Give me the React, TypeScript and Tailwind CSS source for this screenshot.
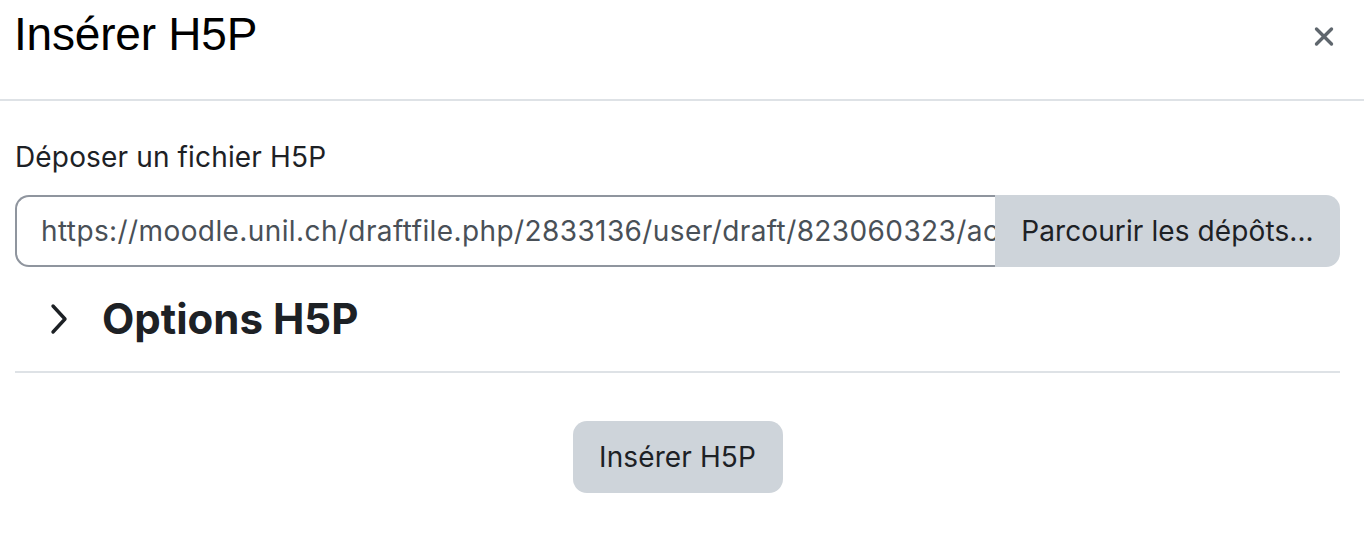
import { X } from "lucide-react";

const fileUrl = "https://moodle.unil.ch/draftfile.php/2833136/user/draft/823060323/activite-interactive.h5p";

export default function App() {
  return (
    <div className="h-[536px] w-[1364px] overflow-hidden bg-white font-['Inter','Noto_Sans',sans-serif] text-[#1d2125]">
      <header className="flex h-[101px] items-start justify-between border-b-2 border-[#dee2e6] pl-[14px] pr-[25px]">
        <h1 className="mt-[6px] font-['Liberation_Sans',Arial,sans-serif] text-[46px] leading-[56px] tracking-[-0.2px] text-black">
          Insérer H5P
        </h1>
        <button className="mt-[21px] flex h-[30px] w-[30px] items-center justify-center text-[#5f666d]" type="button">
          <X size={31} strokeWidth={2.7} />
        </button>
      </header>

      <main className="w-[1355px] px-[15px]">
        <label className="mt-[40px] block text-[28px] leading-[32px] tracking-[0.15px]">Déposer un fichier H5P</label>

        <div className="mt-[22px] flex h-[72px] w-[1325px]">
          <input
            className="h-full min-w-0 flex-1 rounded-l-[14px] border-2 border-r-0 border-[#8f959e] bg-white pl-[24px] text-[28px] tracking-[0.4px] text-[#495057] outline-none"
            readOnly
            type="text"
            value={fileUrl}
          />
          <button
            className="h-full w-[345px] shrink-0 rounded-r-[14px] bg-[#ced4da] text-[28px] tracking-[0.1px] text-[#1d2125]"
            type="button"
          >
            Parcourir les dépôts...
          </button>
        </div>

        <div className="flex h-[106px] items-center border-b-2 border-[#dee2e6]">
          <svg className="ml-[28px] h-[34px] w-[34px]" fill="none" stroke="#1d2125" strokeLinecap="round" strokeLinejoin="round" strokeWidth={3.4} viewBox="0 0 34 34">
            <path d="M10 4 L22 17 L10 30" />
          </svg>
          <h2 className="ml-[25px] text-[42px] font-bold leading-[50px]">Options H5P</h2>
        </div>

        <div className="flex justify-center pt-[48px]">
          <button
            className="h-[72px] w-[210px] rounded-[14px] bg-[#ced4da] text-[28px] tracking-[0.1px] text-[#1d2125]"
            type="button"
          >
            Insérer H5P
          </button>
        </div>
      </main>
    </div>
  );
}
